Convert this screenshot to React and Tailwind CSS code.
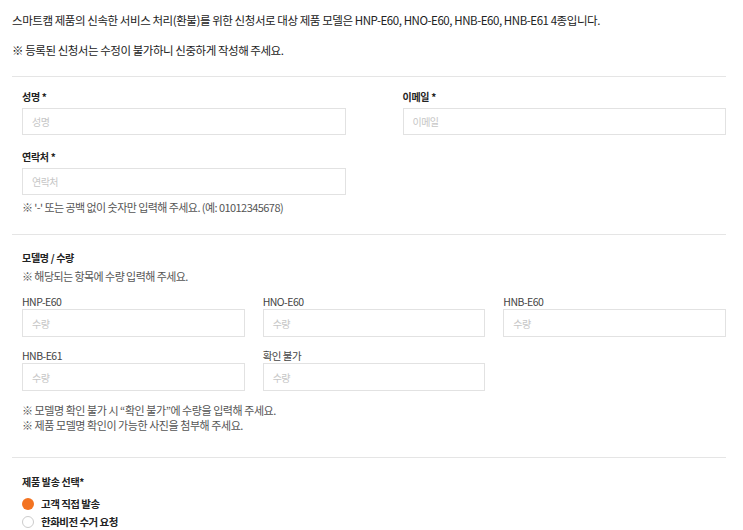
import React from "react";

const font = { fontFamily: '"Noto Sans CJK KR", "Noto Sans", sans-serif' };

function Field({ label, placeholder }) {
  return (
    <div className="flex flex-col">
      <div className="text-[10px] leading-[14px] font-bold text-[#222] tracking-[-0.03em]">{label}</div>
      <div className="mt-[4px] h-[27px] border border-[#e2e2e2] flex items-center px-[9px] text-[10px] text-[#c6c6c6]">
        {placeholder}
      </div>
    </div>
  );
}

function QtyField({ label }) {
  return (
    <div className="flex flex-col">
      <div className="text-[10.5px] leading-[14px] text-[#444] tracking-[-0.05em]">{label}</div>
      <div className="h-[28px] border border-[#e2e2e2] flex items-center px-[9px] text-[10px] text-[#c6c6c6]">
        수량
      </div>
    </div>
  );
}

export default function App() {
  return (
    <div className="w-[743px] h-[530px] overflow-hidden bg-white px-3 pt-[12px] tracking-[-0.035em]" style={font}>
      <p className="text-[11.5px] leading-[16px] text-[#222] tracking-[-0.038em]">
        스마트캠 제품의 신속한 서비스 처리(환불)를 위한 신청서로 대상 제품 모델은 HNP-E60, HNO-E60, HNB-E60, HNB-E61 4종입니다.
      </p>
      <p className="mt-[14px] text-[11.5px] leading-[16px] text-[#222] tracking-[-0.04em]">
        ※ 등록된 신청서는 수정이 불가하니 신중하게 작성해 주세요.
      </p>
      <div className="mt-[18px] w-[714px] border-t border-[#e5e5e5]" />

      <div className="w-[714px] pl-[10px] pt-[13px]">
        <div className="grid grid-cols-2 gap-x-[57px]">
          <Field label="성명 *" placeholder="성명" />
          <Field label="이메일 *" placeholder="이메일" />
        </div>
        <div className="grid grid-cols-2 gap-x-[57px] mt-[15px]">
          <Field label="연락처 *" placeholder="연락처" />
        </div>
        <p className="mt-[5px] text-[11px] leading-[15px] text-[#555]">
          ※ '-' 또는 공백 없이 숫자만 입력해 주세요. (예: 01012345678)
        </p>
      </div>
      <div className="mt-[19px] w-[714px] border-t border-[#e5e5e5]" />

      <div className="w-[714px] pl-[10px] pt-[16px]">
        <div className="text-[10px] leading-[14px] font-bold text-[#222] tracking-[-0.03em]">모델명 / 수량</div>
        <p className="mt-[4px] text-[11px] leading-[15px] text-[#555]">※ 해당되는 항목에 수량 입력해 주세요.</p>
        <div className="mt-[11px] grid grid-cols-3 gap-x-[18px] gap-y-[12px]">
          <QtyField label="HNP-E60" />
          <QtyField label="HNO-E60" />
          <QtyField label="HNB-E60" />
          <QtyField label="HNB-E61" />
          <QtyField label="확인 불가" />
        </div>
        <p className="mt-[12px] text-[11px] leading-[15px] text-[#555] tracking-[-0.04em]">
          ※ 모델명 확인 불가 시 “확인 불가”에 수량을 입력해 주세요.
        </p>
        <p className="text-[11px] leading-[15px] text-[#555] tracking-[-0.04em]">※ 제품 모델명 확인이 가능한 사진을 첨부해 주세요.</p>
      </div>
      <div className="mt-[24px] w-[714px] border-t border-[#e5e5e5]" />

      <div className="w-[714px] pl-[10px] pt-[17px]">
        <div className="text-[10px] leading-[14px] font-bold text-[#222] tracking-[-0.03em]">제품 발송 선택*</div>
        <div className="mt-[6px] flex items-center gap-[7px] h-[18px]">
          <span className="w-[12px] h-[12px] rounded-full bg-[#f37321]" />
          <span className="text-[10.5px] font-bold text-[#222] tracking-[-0.05em]">고객 직접 발송</span>
        </div>
        <div className="flex items-center gap-[7px] h-[18px]">
          <span className="w-[12px] h-[12px] rounded-full border border-[#ccc] bg-white" />
          <span className="text-[10.5px] font-bold text-[#222] tracking-[-0.05em]">한화비전 수거 요청</span>
        </div>
      </div>
    </div>
  );
}
